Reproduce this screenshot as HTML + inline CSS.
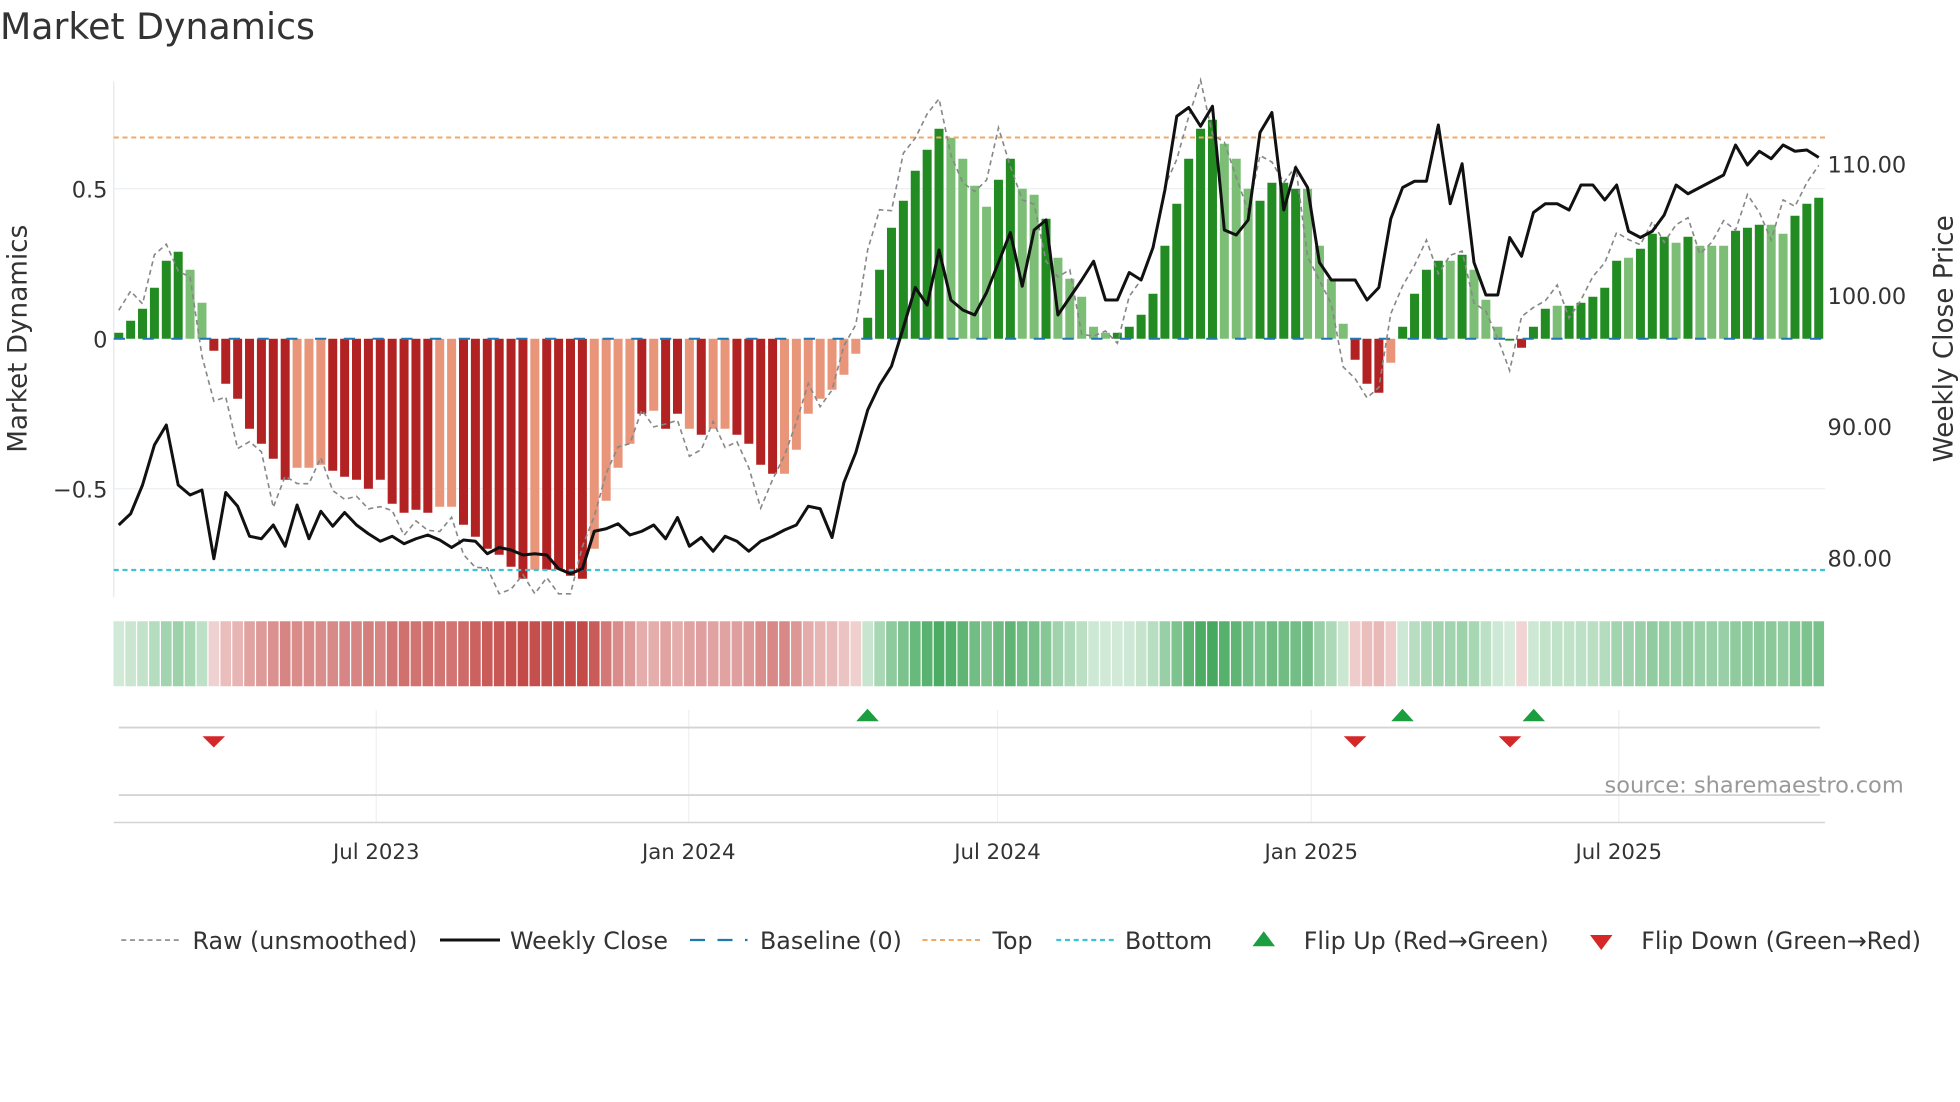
<!DOCTYPE html>
<html><head><meta charset="utf-8"><style>
html,body{margin:0;padding:0;background:#fff;}
svg{display:block;font-family:"DejaVu Sans","Liberation Sans",sans-serif;}
</style></head><body>
<svg id="s" width="1960" height="1102" viewBox="0 0 1568 881.6" xmlns="http://www.w3.org/2000/svg">
<rect width="1568" height="882" fill="#fff"/>
<text x="0" y="31" font-size="29" fill="#333">Market Dynamics</text>
<g stroke="#eceff3" stroke-width="1">
<line x1="91" y1="151" x2="1460" y2="151"/><line x1="91" y1="391" x2="1460" y2="391"/>
</g>
<line x1="91" y1="65" x2="91" y2="478" stroke="#e5e8ee"/>
<g id="bars"></g>
<line x1="91" y1="271" x2="1460" y2="271" stroke="#1f77b4" stroke-width="1.6" stroke-dasharray="9,14"/>
<line x1="91" y1="110" x2="1460" y2="110" stroke="#f0a868" stroke-width="1.6" stroke-dasharray="4,3"/>
<line x1="91" y1="456" x2="1460" y2="456" stroke="#3cc3d6" stroke-width="1.8" stroke-dasharray="4,3"/>
<polyline id="raw" fill="none" stroke="#888" stroke-width="1.3" stroke-dasharray="4,3"/>
<polyline id="close" fill="none" stroke="#111" stroke-width="2.4" stroke-linejoin="round"/>
<g font-size="18" fill="#333">
<text x="86" y="158" text-anchor="end">0.5</text>
<text x="86" y="278" text-anchor="end">0</text>
<text x="86" y="398" text-anchor="end">−0.5</text>
<text x="1462" y="138">110.00</text>
<text x="1462" y="243">100.00</text>
<text x="1462" y="348">90.00</text>
<text x="1462" y="453">80.00</text>
</g>
<text transform="translate(21,271) rotate(-90)" font-size="21" fill="#333" text-anchor="middle">Market Dynamics</text>
<text transform="translate(1562,271) rotate(-90)" font-size="21" fill="#333" text-anchor="middle">Weekly Close Price</text>
<g id="strip"></g>
<g stroke="#eef0f3">
<line x1="301" y1="568" x2="301" y2="658"/><line x1="551" y1="568" x2="551" y2="658"/><line x1="798" y1="568" x2="798" y2="658"/><line x1="1049" y1="568" x2="1049" y2="658"/><line x1="1295" y1="568" x2="1295" y2="658"/>
</g>
<line x1="95" y1="582" x2="1456" y2="582" stroke="#d4d4d4" stroke-width="1.5"/>
<line x1="95" y1="636" x2="1456" y2="636" stroke="#d4d4d4" stroke-width="1.5"/>
<line x1="91" y1="658" x2="1460" y2="658" stroke="#d4d4d4" stroke-width="1.2"/>
<g fill="#d62728">
<polygon points="162,589 180,589 171,598"/><polygon points="1075,589 1093,589 1084,598"/><polygon points="1199,589 1217,589 1208,598"/>
</g>
<g fill="#1a9e3f">
<polygon points="685,577 703,577 694,567"/><polygon points="1113,577 1131,577 1122,567"/><polygon points="1218,577 1236,577 1227,567"/>
</g>
<text x="1523" y="634" font-size="18" fill="#999" text-anchor="end">source: sharemaestro.com</text>
<g font-size="17" fill="#333" text-anchor="middle">
<text x="301" y="687">Jul 2023</text><text x="551" y="687">Jan 2024</text><text x="798" y="687">Jul 2024</text><text x="1049" y="687">Jan 2025</text><text x="1295" y="687">Jul 2025</text>
</g>
<g font-size="19" fill="#333">
<line x1="97" y1="752" x2="143" y2="752" stroke="#888" stroke-width="1.3" stroke-dasharray="4,3"/>
<text x="154" y="759">Raw (unsmoothed)</text>
<line x1="352" y1="752" x2="400" y2="752" stroke="#111" stroke-width="2.4"/>
<text x="408" y="759">Weekly Close</text>
<line x1="552" y1="752" x2="598" y2="752" stroke="#1f77b4" stroke-width="1.8" stroke-dasharray="12,10"/>
<text x="608" y="759">Baseline (0)</text>
<line x1="738" y1="752" x2="784" y2="752" stroke="#f0a868" stroke-width="1.6" stroke-dasharray="4,3"/>
<text x="794" y="759">Top</text>
<line x1="845" y1="752" x2="891" y2="752" stroke="#3cc3d6" stroke-width="1.8" stroke-dasharray="4,3"/>
<text x="900" y="759">Bottom</text>
<polygon points="1002,757 1020,757 1011,745" fill="#1a9e3f"/>
<text x="1043" y="759">Flip Up (Red→Green)</text>
<polygon points="1272,748 1290,748 1281,760" fill="#d62728"/>
<text x="1313" y="759">Flip Down (Green→Red)</text>
</g>
</svg>
<script>
var D="0.02,0.06,0.1,0.17,0.26,0.29,0.23l,0.12l,-0.04,-0.15,-0.2,-0.3,-0.35,-0.4,-0.47,-0.43l,-0.43l,-0.42l,-0.44,-0.46,-0.47,-0.5,-0.47,-0.55,-0.58,-0.57,-0.58,-0.56l,-0.56l,-0.62,-0.66,-0.7,-0.72,-0.76,-0.8,-0.77l,-0.77,-0.77,-0.79,-0.8,-0.7l,-0.54l,-0.43l,-0.35l,-0.25,-0.24l,-0.3,-0.25,-0.3l,-0.32,-0.3l,-0.3l,-0.32,-0.35,-0.42,-0.45,-0.45l,-0.37l,-0.25l,-0.2l,-0.17l,-0.12l,-0.05l,0.07,0.23,0.37,0.46,0.56,0.63,0.7,0.67l,0.6l,0.51l,0.44l,0.53,0.6,0.5l,0.48l,0.4,0.27l,0.2l,0.14l,0.04l,0.02l,0.02,0.04,0.08,0.15,0.31,0.45,0.6,0.7,0.73,0.65l,0.6l,0.5l,0.46,0.52,0.52,0.5,0.5l,0.31l,0.2l,0.05l,-0.07,-0.15,-0.18,-0.08l,0.04,0.15,0.23,0.26,0.26l,0.28,0.23l,0.13l,0.04l,0.0,-0.03,0.04,0.1,0.11l,0.11,0.12,0.14,0.17,0.26,0.27l,0.3,0.35,0.34,0.32l,0.34,0.31l,0.31l,0.31l,0.36,0.37,0.38,0.38l,0.35l,0.41,0.45,0.47".split(",");
var C="420,411,388,356,340,388,396,392,447,394,405,429,431,420,437,404,431,409,421,410,420,427,433,429,435,431,428,432,438,432,433,443,438,440,444,443,444,455,459,455,425,423,419,428,425,420,431,414,437,430,441,429,433,441,433,429,424,420,405,407,430,386,362,328,308,293,262,230,244,200,240,248,252,234,210,186,229,184,176,252,238,224,209,240,240,218,224,198,152,93,86,101,85,184,188,176,106,90,168,134,150,210,224,224,224,240,230,175,150,145,145,100,163,131,210,236,236,190,205,170,163,163,168,148,148,160,148,185,190,185,172,148,155,150,145,140,116,132,121,127,116,121,120,126".split(",");
var ns="http://www.w3.org/2000/svg",n=D.length,sp=(1455-95)/(n-1);
function el(t,a,p){var e=document.createElementNS(ns,t);for(var k in a)e.setAttribute(k,a[k]);p.appendChild(e);}
var bars=document.getElementById("bars"),strip=document.getElementById("strip"),vals=[],rp=[],cp=[];
for(var i=0;i<n;i++){var l=D[i].indexOf("l")>=0,v=parseFloat(D[i]);vals.push(v);
var x=95+sp*i,y=271-v*240,h=Math.abs(v*240);
var col=v>=0?(l?"#7dbe77":"#228b22"):(l?"#e8957a":"#b22222");
el("rect",{x:x-3.6,y:Math.min(y,271),width:7.2,height:Math.max(h,1.5),fill:col},bars);
var a=0.2+Math.min(1,Math.abs(v)/0.8)*0.75;
el("rect",{x:x-sp/2+0.5,y:497,width:sp-1,height:52,fill:v>=0?"#2e9e4a":"#c0403d","fill-opacity":a},strip);
cp.push(x+","+C[i]);}
for(var i=0;i<n;i++){var v2=vals[Math.min(n-1,i+1)]*1.08+0.05*Math.sin(i*2.3)+0.03*Math.cos(i*1.1);v2=Math.max(v2,-0.85);rp.push((95+sp*i)+","+(271-v2*240));}
document.getElementById("raw").setAttribute("points",rp.join(" "));
document.getElementById("close").setAttribute("points",cp.join(" "));
</script>
</body></html>
